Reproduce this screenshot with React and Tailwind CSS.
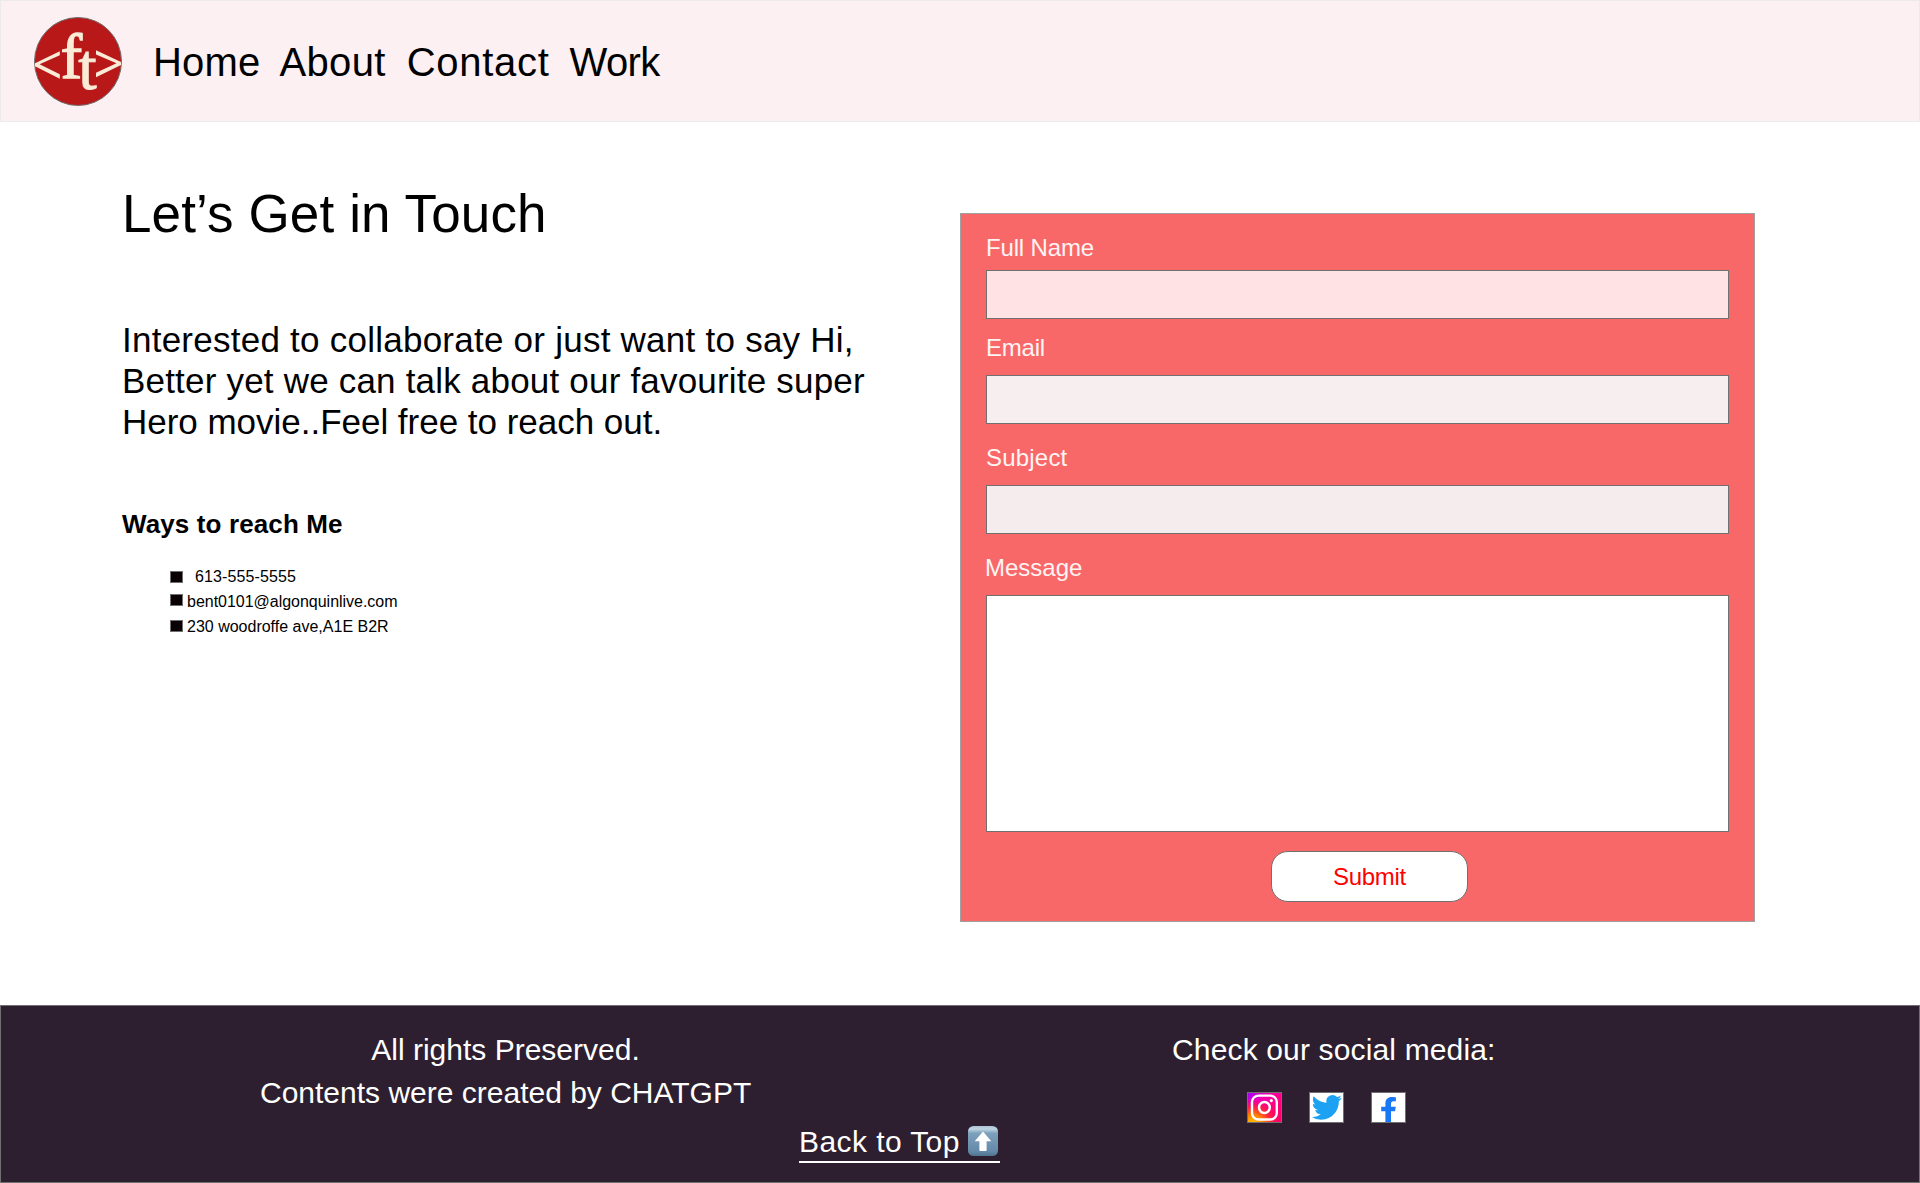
const contacts = [
  { text: "613-555-5555", row: "gap-[12px]", box: "mt-[7px]", track: "tracking-[0.11px]" },
  { text: "bent0101@algonquinlive.com", row: "gap-[4px]", box: "mt-[5px]", track: "tracking-[-0.02px]" },
  { text: "230 woodroffe ave,A1E B2R", row: "gap-[4px]", box: "mt-[6px]", track: "" },
];

function Logo() {
  return (
    <svg className="h-[89px] w-[88px] shrink-0" viewBox="0 0 88 89" aria-label="ft logo">
      <ellipse cx="44" cy="44.5" rx="43.5" ry="44" fill="#b81818" stroke="#707070" />
      <g fill="#faebd7">
        <path d="M25.8 34.3V38.3L5.5 47.3L25.8 57.3V61.8L1 49.2V46.2Z" />
        <path d="M62 33.3V37.5L82.5 46.3L62 55.8V60.2L87 48V45Z" />
      </g>
      <g fill="#faebd7" stroke="#faebd7" fontFamily='"Liberation Serif", serif'>
        <text x="26.8" y="61" fontSize="64" strokeWidth="1.5">f</text>
        <text x="44.3" y="72.3" fontSize="66" strokeWidth="1">t</text>
      </g>
    </svg>
  );
}

function Instagram() {
  return (
    <svg className="h-[31px] w-[35px]" viewBox="0 0 35 31" aria-label="Instagram">
      <defs>
        <linearGradient id="igBase" x1="0" y1="0" x2="1" y2="1">
          <stop offset="0" stopColor="#9a00ff" />
          <stop offset="0.3" stopColor="#f000b4" />
          <stop offset="0.6" stopColor="#ff0080" />
          <stop offset="1" stopColor="#ff0068" />
        </linearGradient>
        <radialGradient id="igWarm" cx="0.15" cy="1.05" r="0.85">
          <stop offset="0" stopColor="#ffc800" />
          <stop offset="0.35" stopColor="#ff8a00" />
          <stop offset="0.65" stopColor="#ff2a30" stopOpacity="0.85" />
          <stop offset="1" stopColor="#ff0060" stopOpacity="0" />
        </radialGradient>
      </defs>
      <rect width="35" height="31" fill="url(#igBase)" />
      <rect width="35" height="31" fill="url(#igWarm)" />
      <rect x="0.5" y="0.5" width="34" height="30" fill="none" stroke="#707070" />
      <rect x="5" y="3.6" width="24.8" height="23.9" rx="6.5" fill="none" stroke="#fff" strokeWidth="2.4" />
      <circle cx="17.4" cy="15.5" r="5.4" fill="none" stroke="#fff" strokeWidth="2.5" />
      <circle cx="24.3" cy="8.6" r="1.6" fill="#fff" />
    </svg>
  );
}

function Twitter() {
  return (
    <svg className="h-[31px] w-[35px]" viewBox="0 0 35 31" aria-label="Twitter">
      <rect x="0.5" y="0.5" width="34" height="30" fill="#fff" stroke="#707070" />
      <path
        transform="translate(2.7 0.3) scale(1.258)"
        fill="#1da1f2"
        d="M23.953 4.57a10 10 0 01-2.825.775 4.958 4.958 0 002.163-2.723c-.951.555-2.005.959-3.127 1.184a4.92 4.92 0 00-8.384 4.482C7.69 8.095 4.067 6.13 1.64 3.162a4.822 4.822 0 00-.666 2.475c0 1.71.87 3.213 2.188 4.096a4.904 4.904 0 01-2.228-.616v.06a4.923 4.923 0 003.946 4.827 4.996 4.996 0 01-2.212.085 4.936 4.936 0 004.604 3.417 9.867 9.867 0 01-6.102 2.105c-.39 0-.779-.023-1.17-.067a13.995 13.995 0 007.557 2.209c9.053 0 13.998-7.496 13.998-13.985 0-.21 0-.42-.015-.63A9.935 9.935 0 0024 4.59z"
      />
    </svg>
  );
}

function Facebook() {
  return (
    <svg className="h-[31px] w-[35px]" viewBox="0 0 35 31" aria-label="Facebook">
      <rect x="0.5" y="0.5" width="34" height="30" fill="#fff" stroke="#707070" />
      <path
        fill="#1877f2"
        d="M14.4 30V19.3H10.2V14.8H14.4V11.4C14.4 7.2 16.9 4.9 20.8 4.9C22.6 4.9 24.9 5.2 24.9 5.2V9.2H22.7C20.6 9.2 20 10.4 20 11.8V14.8H24.8L24 19.3H20V30Z"
      />
    </svg>
  );
}

function UpArrow() {
  return (
    <svg className="mt-[1px] h-[30px] w-[30px]" viewBox="0 0 30 30" aria-label="up arrow">
      <defs>
        <linearGradient id="keycap" x1="0" y1="0" x2="0" y2="1">
          <stop offset="0" stopColor="#a9c3d6" />
          <stop offset="0.1" stopColor="#c0d5e4" />
          <stop offset="0.24" stopColor="#7da0bc" />
          <stop offset="0.85" stopColor="#6489a8" />
          <stop offset="1" stopColor="#4f7391" />
        </linearGradient>
      </defs>
      <rect width="30" height="30" rx="5.5" fill="url(#keycap)" />
      <path d="M15 5.5L23.3 15.2H18.6V24.2Q18.6 25 17.8 25H12.2Q11.4 25 11.4 24.2V15.2H6.7Z" fill="#fff" />
    </svg>
  );
}

function Field({ label, labelClass, inputClass }) {
  return (
    <label className="flex flex-col">
      <span className={"text-[24px] leading-[28px] text-[#fff4f4] " + labelClass}>{label}</span>
      <input className={"block h-[49px] w-full border border-[#707070] px-3 outline-none " + inputClass} />
    </label>
  );
}

export default function App() {
  return (
    <div className="flex h-[1183px] w-[1920px] flex-col overflow-hidden bg-white font-['Liberation_Sans',Arial,sans-serif] text-black">
      <header className="flex h-[122px] shrink-0 items-center border border-[#ebebeb] bg-[#fcf0f2] pl-[33px]">
        <Logo />
        <nav className="mt-[2px] ml-[31px] flex gap-5 text-[40px] leading-[48px]">
          <a className="tracking-[0.18px]">Home</a>
          <a className="-ml-px tracking-[0.35px]">About</a>
          <a className="ml-px tracking-[0.71px]">Contact</a>
          <a className="tracking-[-0.6px]">Work</a>
        </nav>
      </header>

      <main className="flex h-[883px] shrink-0">
        <section className="w-[960px] shrink-0 pt-[60px] pl-[122px]">
          <h1 className="text-[53px] leading-[64px] tracking-[0.13px]">Let’s Get in Touch</h1>
          <p className="mt-[73px] text-[35px] leading-[41px] whitespace-nowrap">
            <span className="block tracking-[0.245px]">Interested to collaborate or just want to say Hi,</span>
            <span className="block tracking-[0.196px]">Better yet we can talk about our favourite super</span>
            <span className="block tracking-[-0.02px]">Hero movie..Feel free to reach out.</span>
          </p>
          <h2 className="mt-[66px] text-[26px] leading-[32px] font-bold tracking-[0.12px]">Ways to reach Me</h2>
          <ul className="mt-6 pl-12 text-[16px] leading-[25px]">
            {contacts.map((c) => (
              <li key={c.text} className={"flex items-start " + c.row}>
                <span className={"h-[12px] w-[13px] border border-[#707070] bg-[#080002] " + c.box} />
                <span className={c.track}>{c.text}</span>
              </li>
            ))}
          </ul>
        </section>

        <form className="mt-[91px] flex h-[709px] w-[795px] flex-col border border-[#a0a0a0] bg-[#f86868] px-[25px] pt-5">
          <Field label="Full Name" labelClass="mb-2 tracking-[-0.16px]" inputClass="bg-[#ffe2e3]" />
          <Field label="Email" labelClass="mt-[15px] mb-[13px] tracking-[-0.24px]" inputClass="bg-[#f7eeef]" />
          <Field label="Subject" labelClass="mt-5 mb-[13px] tracking-[0.2px]" inputClass="bg-[#f5eced]" />
          <label className="flex flex-col">
            <span className="mt-5 mb-[13px] -ml-px text-[24px] leading-[28px] text-[#fff4f4]">Message</span>
            <textarea className="block h-[237px] w-full resize-none border border-[#707070] bg-white outline-none" />
          </label>
          <button
            type="button"
            className="mt-[19px] ml-[285px] h-[51px] w-[197px] rounded-[17px] border border-[#707070] bg-white text-[24px] leading-[28px] tracking-[-0.3px] text-[#ff0000]"
          >
            Submit
          </button>
        </form>
      </main>

      <footer className="flex h-[178px] shrink-0 items-start border border-[#707070] bg-[#2d1f2f] pl-[259px] text-[30px] text-white">
        <div className="mt-[22px] w-[491px] text-center leading-[43px] whitespace-nowrap">
          <p>All rights Preserved.</p>
          <p>Contents were created by CHATGPT</p>
        </div>
        <a className="mt-[119px] ml-[48px] flex h-[38px] w-[201px] items-start border-b-2 border-white leading-[34px] whitespace-nowrap">
          <span className="w-[169px] tracking-[0.42px]">Back to Top</span>
          <UpArrow />
        </a>
        <div className="mt-[22px] ml-[172px] leading-[43px]">
          <p className="whitespace-nowrap tracking-[0.15px]">Check our social media:</p>
          <div className="mt-[21px] ml-[75px] flex gap-[27px]">
            <Instagram />
            <Twitter />
            <Facebook />
          </div>
        </div>
      </footer>
    </div>
  );
}
